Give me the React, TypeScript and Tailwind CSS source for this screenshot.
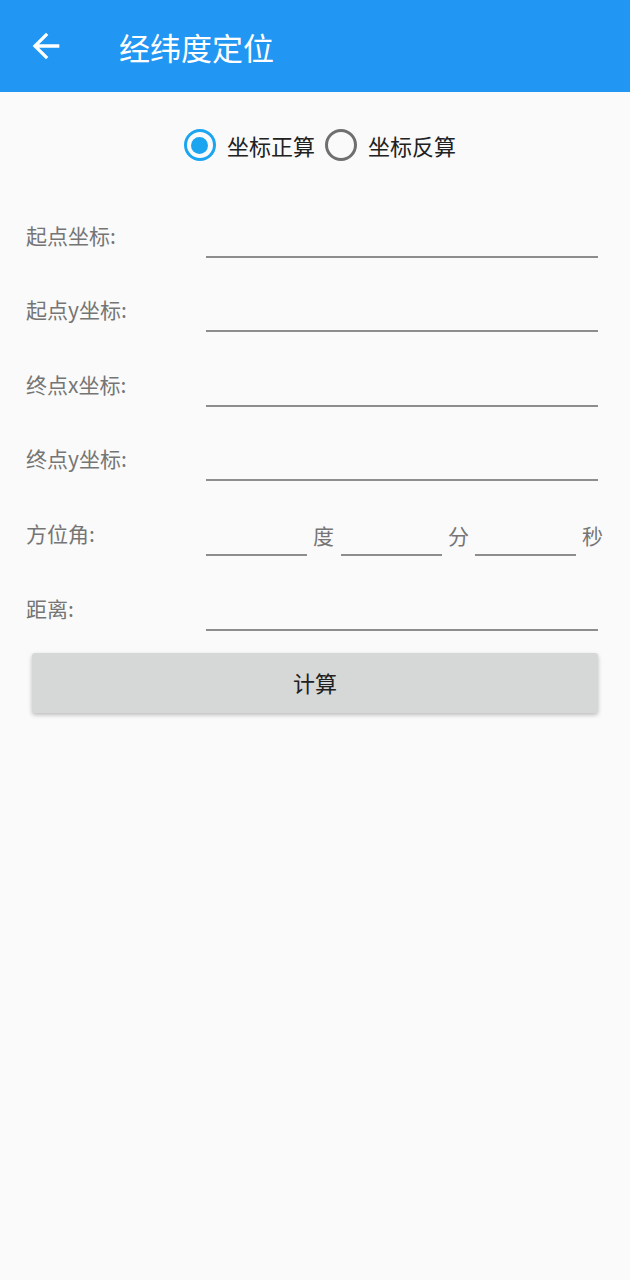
import React, { useState } from "react";

const font = { fontFamily: '"Noto Sans CJK SC", "Noto Sans", sans-serif' };

const fields = ["起点坐标:", "起点y坐标:", "终点x坐标:", "终点y坐标:"];

function Radio({ checked, label, onClick }: { checked: boolean; label: string; onClick: () => void }) {
  return (
    <button onClick={onClick} className="flex items-center">
      <span
        className={`flex h-[32px] w-[32px] items-center justify-center rounded-full border-[3px] ${
          checked ? "border-[#1ba5f1]" : "border-[#6f6f6f]"
        }`}
      >
        {checked && <span className="h-[17px] w-[17px] rounded-full bg-[#1ba5f1]" />}
      </span>
      <span className="ml-[11px] text-[22px] leading-[30px] text-[#212121]">{label}</span>
    </button>
  );
}

function Underline({ className = "" }: { className?: string }) {
  return <div className={`h-[30px] border-b-2 border-[#8d8d8d] ${className}`} />;
}

export default function App() {
  const [mode, setMode] = useState(0);

  return (
    <div className="min-h-[1280px] w-full bg-[#fafafa]" style={font}>
      <div className="flex h-[92px] items-center bg-[#2196f3]">
        <svg viewBox="0 0 24 24" className="ml-[26px] h-[40px] w-[40px] fill-white">
          <path d="M20 11H7.83l5.59-5.59L12 4l-8 8 8 8 1.41-1.41L7.83 13H20v-2z" />
        </svg>
        <h1 className="ml-[53px] text-[31px] font-normal leading-none text-white">经纬度定位</h1>
      </div>

      <div className="flex h-[91px] items-start justify-center gap-[10px] pl-[10px] pt-[37px]">
        <Radio checked={mode === 0} label="坐标正算" onClick={() => setMode(0)} />
        <Radio checked={mode === 1} label="坐标反算" onClick={() => setMode(1)} />
      </div>

      {fields.map((f) => (
        <div key={f} className="flex h-[74.6px] items-end pl-[26px] pr-[32px]">
          <span className="mb-[8px] w-[180px] text-[21px] leading-[30px] text-[#757575]">{f}</span>
          <Underline className="flex-1" />
        </div>
      ))}

      <div className="flex h-[74.6px] items-end pl-[26px]">
        <span className="mb-[8px] w-[180px] text-[21px] leading-[30px] text-[#757575]">方位角:</span>
        <Underline className="w-[101px]" />
        <span className="mb-[6px] ml-[6px] mr-[7px] text-[21px] leading-[30px] text-[#757575]">度</span>
        <Underline className="w-[101px]" />
        <span className="mb-[6px] ml-[6px] mr-[6px] text-[21px] leading-[30px] text-[#757575]">分</span>
        <Underline className="w-[101px]" />
        <span className="mb-[6px] ml-[6px] text-[21px] leading-[30px] text-[#757575]">秒</span>
      </div>

      <div className="flex h-[74.6px] items-end pl-[26px] pr-[32px]">
        <span className="mb-[8px] w-[180px] text-[21px] leading-[30px] text-[#757575]">距离:</span>
        <Underline className="flex-1" />
      </div>

      <div className="mx-[32px] mt-[22px]">
        <button className="flex h-[60px] w-full items-center justify-center rounded-[3px] bg-[#d6d7d7] text-[22px] text-[#212121] shadow-[0_2px_4px_rgba(0,0,0,0.25)]">
          计算
        </button>
      </div>
    </div>
  );
}
